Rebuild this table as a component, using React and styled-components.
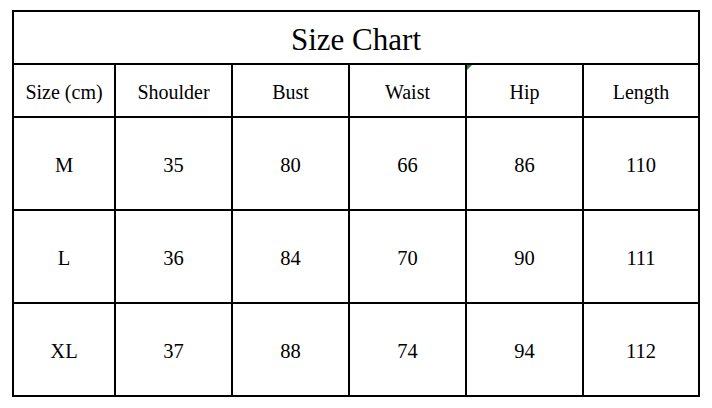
import React from "react";
import styled, { createGlobalStyle } from "styled-components";

const Global = createGlobalStyle`
  html, body { margin: 0; padding: 0; background: #fff; }
  body { font-family: "Liberation Serif", "Times New Roman", serif; color: #000; }
`;

const Page = styled.div`
  width: 712px;
  height: 408px;
  padding: 10px 0 0 12px;
  box-sizing: border-box;
  background: #fff;
`;

const Chart = styled.div`
  display: inline-grid;
  grid-template-columns: 100px 115px 115px 115px 115px 114px;
  grid-template-rows: 51px 51px 91px 91px 91px;
  gap: 2px;
  padding: 2px;
  background: #000;
`;

const Title = styled.div`
  grid-column: 1 / -1;
  background: #fff;
  display: flex;
  align-items: center;
  justify-content: center;
  font-size: 31px;
  padding-top: 4px;
`;

const Cell = styled.div`
  position: relative;
  background: #fff;
  display: flex;
  align-items: center;
  justify-content: center;
  font-size: ${(p) => (p.$head ? "20px" : "20.5px")};
  padding-top: ${(p) => (p.$head ? "3px" : "4px")};
  white-space: nowrap;
`;

const Marker = styled.span`
  position: absolute;
  left: 0;
  top: 0;
  width: 0;
  height: 0;
  border-top: 5px solid #2e7d32;
  border-right: 5px solid transparent;
`;

const headers = ["Size (cm)", "Shoulder", "Bust", "Waist", "Hip", "Length"];
const rows = [
  ["M", "35", "80", "66", "86", "110"],
  ["L", "36", "84", "70", "90", "111"],
  ["XL", "37", "88", "74", "94", "112"],
];

export default function App() {
  return (
    <>
      <Global />
      <Page>
        <Chart>
          <Title>Size Chart</Title>
          {headers.map((h) => (
            <Cell key={h} $head>
              {h === "Hip" && <Marker />}
              {h}
            </Cell>
          ))}
          {rows.map((r) =>
            r.map((v, i) => <Cell key={r[0] + i}>{v}</Cell>)
          )}
        </Chart>
      </Page>
    </>
  );
}
